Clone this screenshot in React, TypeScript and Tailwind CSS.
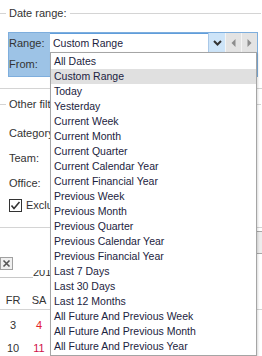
import React from "react";

const items = [
  "All Dates",
  "Custom Range",
  "Today",
  "Yesterday",
  "Current Week",
  "Current Month",
  "Current Quarter",
  "Current Calendar Year",
  "Current Financial Year",
  "Previous Week",
  "Previous Month",
  "Previous Quarter",
  "Previous Calendar Year",
  "Previous Financial Year",
  "Last 7 Days",
  "Last 30 Days",
  "Last 12 Months",
  "All Future And Previous Week",
  "All Future And Previous Month",
  "All Future And Previous Year",
];

export default function App() {
  return (
    <div
      className="relative w-[262px] h-[356px] overflow-hidden bg-white text-[#333]"
      style={{ fontFamily: '"Liberation Sans", Arial, sans-serif' }}
    >
      {/* Date range */}
      <div className="pt-[5px]">
        <div className="flex items-center h-[16px]">
          <div className="w-[6px] h-px bg-[#d4d4d4]" />
          <span className="ml-[3px] mr-[4px] text-[11px] text-[#333]">Date range:</span>
          <div className="flex-1 h-px bg-[#d4d4d4] mr-[1px]" />
        </div>
      </div>
      <div className="mt-[11px] ml-[8px] w-[250px] h-[45px] bg-[#9dc3e6] border border-[#7eaedd] flex flex-col">
        <div className="flex h-[20px]">
          <div className="w-[41px] flex items-center text-[11px]">Range:</div>
          <div className="flex-1 flex bg-white border-t border-r border-[#5f9ddb]">
            <div className="flex-1 flex items-center pl-[3px] text-[10.5px] text-[#1b2340]">Custom Range</div>
          </div>
        </div>
        <div className="flex flex-1">
          <div className="w-[41px] flex items-center text-[11px]">From:</div>
        </div>
      </div>
      <div className="mt-[11px] h-px bg-[#d4d4d4]" />

      {/* Other filters */}
      <div className="mt-[7px] flex items-center h-[16px]">
        <div className="w-[6px] h-px bg-[#d4d4d4]" />
        <div className="ml-[3px] w-[41px] overflow-hidden whitespace-nowrap text-[11px] text-[#333]">Other filters</div>
        <div className="flex-1 h-px bg-[#d4d4d4] mr-[1px]" />
      </div>
      <div className="mt-[9px] flex flex-col pl-[9px] text-[11px]">
        <div className="h-[25px] flex items-center">
          <div className="w-[41px] overflow-hidden whitespace-nowrap">Category</div>
        </div>
        <div className="h-[25px] flex items-center">Team:</div>
        <div className="h-[25px] flex items-center">Office:</div>
        <div className="h-[18px] flex items-center">
          <div className="w-[13px] h-[13px] border border-[#333] bg-white flex items-center justify-center">
            <svg width="11" height="11" viewBox="0 0 11 11">
              <polyline points="1.5,5.5 4,8.5 9.5,2" fill="none" stroke="#333" strokeWidth="1.6" />
            </svg>
          </div>
          <div className="ml-[4px] w-[24px] overflow-hidden whitespace-nowrap">Exclude</div>
        </div>
      </div>
      <div className="mt-[13px] h-px bg-[#d4d4d4]" />
      <div className="mt-[3px] ml-[140px] h-[23px] bg-[#ededed] border-y border-[#a8a8a8]" />

      {/* calendar area */}
      <div className="mt-[3px] text-[11px]">
        <div className="w-[13px] h-[13px] border border-[#a0a0a0] bg-[#f0f0f0] flex items-center justify-center">
          <svg width="9" height="9" viewBox="0 0 9 9">
            <path d="M1.5 1.5 L7.5 7.5 M7.5 1.5 L1.5 7.5" stroke="#555" strokeWidth="1.6" />
          </svg>
        </div>
        <div className="flex items-end h-[8px]">
          <div className="w-[33px] h-[8px] border-b border-[#c8c8c8]" />
          <div className="w-[17px] h-[8px] overflow-hidden">
            <div className="leading-[12px] mt-[-4px] whitespace-nowrap">2019</div>
          </div>
        </div>
        <div className="flex h-[16px] leading-[16px] mt-[14px]">
          <div className="w-[26px] text-center">FR</div>
          <div className="w-[26px] text-center">SA</div>
        </div>
        <div className="mt-[1px] h-px bg-[#d4d4d4]" />
        <div className="flex h-[16px] leading-[16px] mt-[7px]">
          <div className="w-[26px] text-center">3</div>
          <div className="w-[26px] text-center text-[#e3202a]">4</div>
        </div>
        <div className="flex h-[16px] leading-[16px] mt-[7px]">
          <div className="w-[26px] text-center">10</div>
          <div className="w-[26px] text-center text-[#d0104a]">11</div>
        </div>
      </div>

      {/* combo buttons */}
      <div className="absolute left-[208px] top-[33px] h-[20px] flex">
        <div className="w-[17px] h-[20px] bg-[#cde4f8] border-l border-[#a9c8e8] flex items-center justify-center">
          <svg width="9" height="6" viewBox="0 0 9 6">
            <polyline points="1,1 4.5,4.5 8,1" fill="none" stroke="#333" strokeWidth="2" />
          </svg>
        </div>
        <div className="w-[16px] h-[20px] bg-[#e3e3e3] border-l border-[#f4f4f4] flex items-center justify-center">
          <svg width="5" height="8" viewBox="0 0 5 8">
            <polygon points="4.5,0 4.5,8 0.5,4" fill="#8c8c8c" />
          </svg>
        </div>
        <div className="w-[16px] h-[20px] bg-[#e3e3e3] border-l border-[#f4f4f4] flex items-center justify-center">
          <svg width="5" height="8" viewBox="0 0 5 8">
            <polygon points="0.5,0 0.5,8 4.5,4" fill="#8c8c8c" />
          </svg>
        </div>
      </div>

      {/* dropdown list */}
      <div className="absolute left-[50px] top-[52px] w-[207px] h-[304px] bg-white border border-[#a5a5a5] pt-[1px] shadow-[1px_1px_2px_rgba(0,0,0,0.15)]">
        {items.map((t, i) => (
          <div
            key={t}
            className={`h-[15px] leading-[15px] pl-[3px] text-[10.5px] whitespace-nowrap text-[#1b2340] ${
              i === 1 ? "bg-[#e0e0e0]" : ""
            }`}
          >
            {t}
          </div>
        ))}
      </div>
    </div>
  );
}
